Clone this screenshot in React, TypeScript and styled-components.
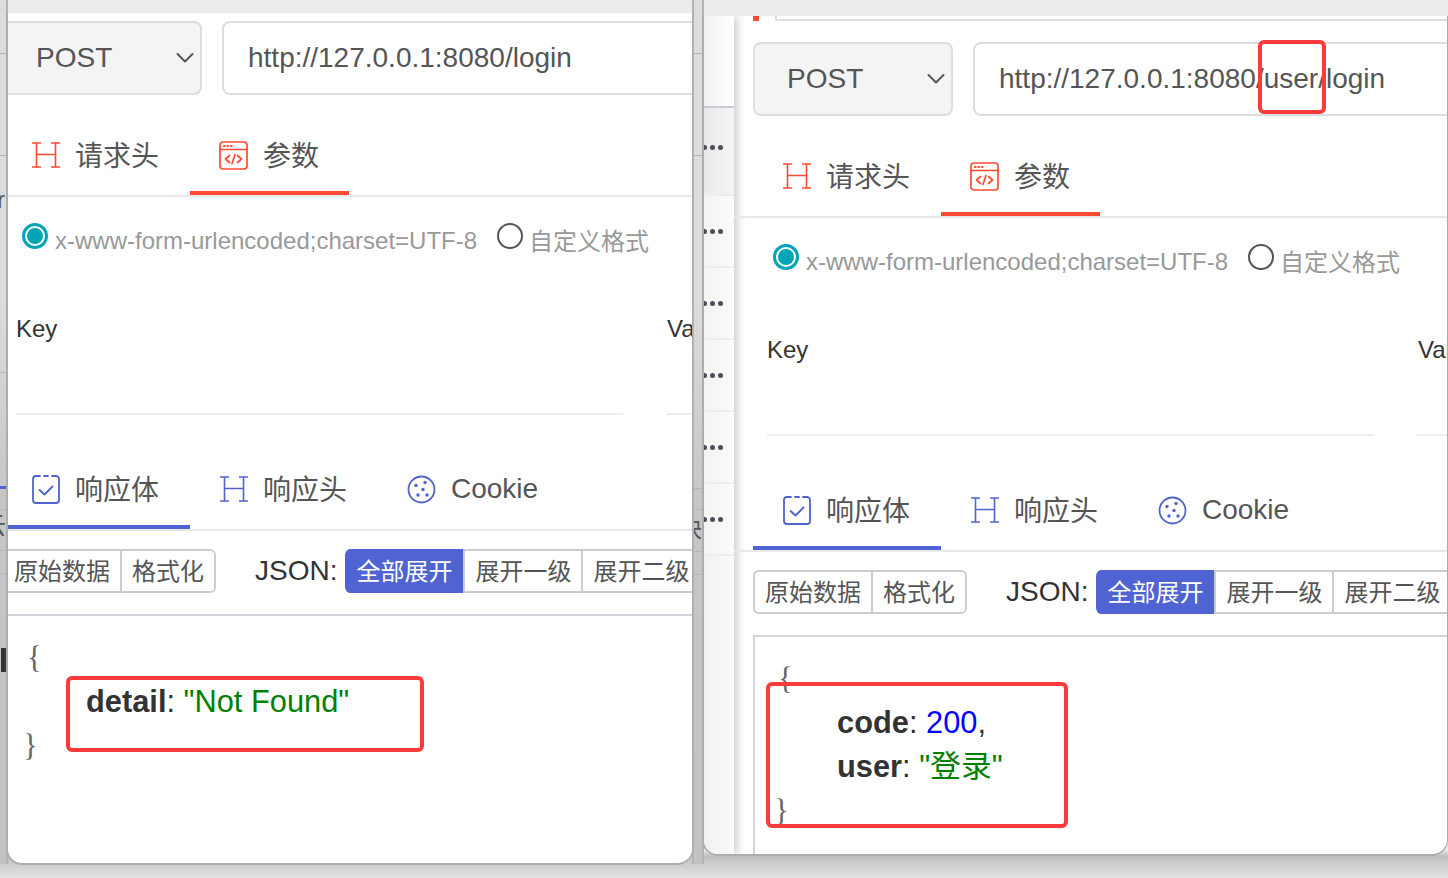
import React from 'react';
import styled, { createGlobalStyle } from 'styled-components';

const Global = createGlobalStyle`
  html, body { margin: 0; padding: 0; background: #e4e4e4; }
  body { font-family: "Liberation Sans", "Noto Sans CJK SC", sans-serif; }
  * { box-sizing: border-box; }
`;

const RED = '#ff4a33';
const BLUE = '#4f63d2';

const Desktop = styled.div`
  position: relative;
  width: 1448px;
  height: 878px;
  overflow: hidden;
  background: linear-gradient(180deg, #ececec 0, #ececec 850px, #bfbfbf 856px, #e4e4e4 878px);
`;
const Strip = styled.div<{ $left: number; $width: number }>`
  position: absolute;
  top: 0;
  bottom: 14px;
  left: ${p => p.$left}px;
  width: ${p => p.$width}px;
  overflow: hidden;
  background: linear-gradient(180deg, #dcdcdc 0, #dcdcdc 300px, #c6c6c6 500px, #c2c2c2 100%);
  border-right: 2px solid #b4b4b4;
  border-left: ${p => (p.$left > 0 ? '2px solid #b4b4b4' : 'none')};
`;
const StripRule = styled.div<{ $top: number; $color?: string; $height?: number }>`
  position: absolute;
  left: 0;
  right: 0;
  top: ${p => p.$top}px;
  height: ${p => p.$height ?? 1}px;
  background: ${p => p.$color ?? '#b4b4b4'};
`;
const StripGlyph = styled.span<{ $top: number; $right: number }>`
  position: absolute;
  top: ${p => p.$top}px;
  right: ${p => p.$right}px;
  font-size: 24px;
  line-height: 28px;
  color: #555;
`;
const StripMark = styled.div`
  position: absolute;
  left: 1px;
  top: 648px;
  width: 5px;
  height: 24px;
  background: #333;
`;

const Win = styled.div<{ $left: number; $top: number; $width: number; $height: number; $z: number }>`
  position: absolute;
  left: ${p => p.$left}px;
  top: ${p => p.$top}px;
  width: ${p => p.$width}px;
  height: ${p => p.$height}px;
  z-index: ${p => p.$z};
  display: flex;
  overflow: hidden;
  background: #fff;
  border-left: 2px solid #adadad;
  border-bottom: 2px solid #adadad;
  border-right: 1px solid #adadad;
  border-radius: 0 0 16px 16px;
`;

const Rail = styled.div`
  flex: none;
  width: 30px;
  display: flex;
  flex-direction: column;
  background: linear-gradient(90deg, #f1f1f1, #fafafa);
  box-shadow: 4px 0 8px rgba(0, 0, 0, 0.18);
`;
const RailHead = styled.div`
  height: 92px;
  border-bottom: 2px solid #c8cdd5;
  background: linear-gradient(90deg, #f2f2f2, #fff);
`;
const RailRow = styled.div<{ $active?: boolean; $h: number }>`
  height: ${p => p.$h}px;
  flex: none;
  display: flex;
  align-items: center;
  gap: 3px;
  padding-bottom: ${p => (p.$active ? 8 : 0)}px;
  background: ${p => (p.$active ? 'linear-gradient(90deg, #e8e8e8, #f6f6f6)' : 'linear-gradient(90deg, #f3f3f3, #fbfbfb)')};
  border-bottom: 2px solid #ededed;
`;
const Dot = styled.i`
  flex: none;
  width: 5px;
  height: 5px;
  border-radius: 50%;
  background: #4a4f57;
  &:first-child { margin-left: -2px; }
`;

const Panel = styled.div<{ $inset: number; $shift: number }>`
  flex: none;
  width: 780px;
  margin-left: ${p => p.$shift}px;
  padding-left: ${p => p.$inset}px;
  --inset: ${p => p.$inset}px;
`;
const Stub = styled.div`
  height: 5px;
  display: flex;
  margin-bottom: 21px;
`;
const StubMark = styled.div`
  width: 6px;
  background: ${RED};
  margin-right: 16px;
`;
const StubField = styled.div`
  flex: 1;
  border-left: 2px solid #ddd;
  border-bottom: 2px solid #ddd;
`;
const RequestBar = styled.div<{ $top: number }>`
  display: flex;
  gap: 20px;
  padding-top: ${p => p.$top}px;
`;
const MethodSelect = styled.div`
  flex: none;
  width: 200px;
  height: 74px;
  display: flex;
  align-items: center;
  justify-content: space-between;
  padding: 0 6px 0 32px;
  background: #f4f4f4;
  border: 2px solid #ddd;
  border-radius: 8px;
  font-size: 28px;
  color: #555;
`;
const UrlField = styled.div`
  flex: none;
  width: 540px;
  height: 74px;
  display: flex;
  align-items: center;
  padding-left: 24px;
  border: 2px solid #ddd;
  border-radius: 8px;
  font-size: 28px;
  color: #555;
`;
const TabBar = styled.div<{ $top: number }>`
  display: flex;
  height: 80px;
  margin-top: ${p => p.$top}px;
  margin-left: calc(var(--inset) * -1);
  padding-left: var(--inset);
  border-bottom: 2px solid #e8e8e8;
`;
const Tab = styled.div<{ $active?: boolean; $tone: string; $w: number }>`
  position: relative;
  flex: none;
  width: ${p => p.$w}px;
  display: flex;
  align-items: center;
  gap: 15px;
  padding: 0 0 2px 29px;
  font-size: 28px;
  color: #555;
  &::after {
    content: '';
    display: ${p => (p.$active ? 'block' : 'none')};
    position: absolute;
    left: 0;
    right: 0;
    bottom: 0;
    height: 4px;
    background: ${p => p.$tone};
  }
  svg { flex: none; color: ${p => p.$tone}; }
`;
const CjkLabel = styled.span`
  padding-bottom: 2px;
`;
const RadioRow = styled.div`
  display: flex;
  align-items: center;
  height: 28px;
  margin: 30px 0 0 20px;
  font-size: 24px;
  color: #999;
`;
const RadioMark = styled.span<{ $on?: boolean }>`
  flex: none;
  position: relative;
  top: -5px;
  width: 26px;
  height: 26px;
  margin-right: ${p => (p.$on ? 7 : 6)}px;
  border-radius: 50%;
  border: ${p => (p.$on ? '3px solid #00a6b8' : '2px solid #555')};
  background: #fff;
  &::after {
    content: '';
    display: ${p => (p.$on ? 'block' : 'none')};
    position: absolute;
    inset: 2px;
    border-radius: 50%;
    background: #00a6b8;
  }
`;
const RadioLabel = styled.span<{ $gap?: number; $cjk?: boolean }>`
  margin-right: ${p => p.$gap ?? 0}px;
  padding-bottom: ${p => (p.$cjk ? 4 : 0)}px;
  white-space: nowrap;
`;
const ParamHead = styled.div`
  display: flex;
  height: 28px;
  margin: 60px 0 0 14px;
  font-size: 24px;
  line-height: 28px;
  color: #333;
`;
const KeyCol = styled.div`
  width: 651px;
  flex: none;
`;
const ParamRules = styled.div`
  display: flex;
  gap: 43px;
  margin: 70px 0 0 14px;
`;
const ParamRule = styled.div<{ $w: number }>`
  flex: none;
  width: ${p => p.$w}px;
  height: 2px;
  background: #eee;
`;
const Toolbar = styled.div`
  display: flex;
  align-items: center;
  height: 44px;
  margin-top: 18px;
`;
const BtnGroup = styled.div`
  flex: none;
  display: flex;
  height: 44px;
  border: 2px solid #ccc;
  border-radius: 6px;
  overflow: hidden;
`;
const GroupBtn = styled.div<{ $on?: boolean; $w: number }>`
  flex: none;
  width: ${p => p.$w}px;
  display: flex;
  align-items: center;
  justify-content: center;
  padding-bottom: 3px;
  font-size: 24px;
  white-space: nowrap;
  color: ${p => (p.$on ? '#fff' : '#555')};
  background: ${p => (p.$on ? BLUE : '#fff')};
  & + & { border-left: 2px solid #ccc; }
`;
const JsonLabel = styled.span`
  margin: 0 8px 0 39px;
  font-size: 28px;
  color: #333;
  white-space: nowrap;
`;
const ActionGroup = styled(BtnGroup)`
  border: none;
  width: 380px;
  border-radius: 6px 0 0 6px;
  ${GroupBtn} {
    border-top: 2px solid #ccc;
    border-bottom: 2px solid #ccc;
  }
  ${GroupBtn}:first-child {
    border-color: ${BLUE};
  }
`;
const JsonBox = styled.div`
  margin-top: 21px;
  height: 300px;
  padding: 20px 0 0 0;
  border-top: 2px solid #d0d5dc;
  border-left: 2px solid #d0d5dc;
  font-size: 30.8px;
  line-height: 44px;
  color: #333;
`;
const Brace = styled.div<{ $x: number }>`
  padding-left: ${p => p.$x}px;
  font-family: "Liberation Serif", serif;
  color: #666;
`;
const JsonLine = styled.div`
  padding-left: 82px;
  white-space: nowrap;
`;
const JsonKey = styled.b`
  font-weight: 700;
`;
const JsonStr = styled.span`
  color: #008000;
`;
const JsonNum = styled.span`
  color: #0000ff;
`;
const Note = styled.div<{ $l: number; $t: number; $w: number; $h: number }>`
  position: absolute;
  z-index: 5;
  left: ${p => p.$l}px;
  top: ${p => p.$t}px;
  width: ${p => p.$w}px;
  height: ${p => p.$h}px;
  border: 4px solid #fb3b3b;
  border-radius: 6px;
  pointer-events: none;
`;

const Chevron = () => (
  <svg width="18" height="12" viewBox="0 0 18 12" fill="none" stroke="#555" strokeWidth="2" strokeLinecap="round" strokeLinejoin="round">
    <path d="M1.5 2 9 9.5 16.5 2" />
  </svg>
);
const HeaderIcon = () => (
  <svg width="29" height="26" viewBox="-1 0 29 26" fill="none" stroke="currentColor" strokeWidth="1.6">
    <path d="M0 1h9M4.5 1v24M0 25h9M19 1h9M23.5 1v24M19 25h9M4.5 12.5h19" />
  </svg>
);
const ParamIcon = () => (
  <svg width="29" height="29" viewBox="0 0 29 29" fill="none" stroke="currentColor" strokeWidth="1.7" strokeLinecap="round" strokeLinejoin="round">
    <rect x="1" y="1" width="27" height="27" rx="3" />
    <path d="M1 8.5h27" />
    <path d="M5 5h.6M8.5 5h.6M12 5h.6" strokeWidth="2.2" />
    <path d="M10.5 14.5 6.5 18l4 3.5M18.5 14.5l4 3.5-4 3.5M16 13.5l-3 9" />
  </svg>
);
const BodyIcon = () => (
  <svg width="29" height="29" viewBox="-1 0 29 29" fill="none" stroke="currentColor" strokeWidth="1.8" strokeLinecap="round" strokeLinejoin="round">
    <path d="M8 1H4a3 3 0 0 0-3 3v21a3 3 0 0 0 3 3h20a3 3 0 0 0 3-3V4a3 3 0 0 0-3-3h-4M12 1h4" />
    <path d="m7.5 15 5 4.5 8-8" />
  </svg>
);
const CookieIcon = () => (
  <svg width="29" height="29" viewBox="0 0 29 29" fill="none">
    <circle cx="14.5" cy="14.5" r="13" stroke="currentColor" strokeWidth="1.8" />
    <g fill="currentColor">
      <circle cx="9" cy="10.5" r="1.7" />
      <circle cx="18" cy="7.5" r="1.7" />
      <circle cx="16" cy="14.5" r="1.7" />
      <circle cx="11" cy="20" r="1.7" />
      <circle cx="20" cy="20" r="1.7" />
    </g>
  </svg>
);

type Props = {
  inset: number;
  shift: number;
  top: number;
  url: string;
  stub?: boolean;
  children: React.ReactNode;
};

const ApiPanel = ({ inset, shift, top, url, stub, children }: Props) => (
  <Panel $inset={inset} $shift={shift}>
    {stub && (
      <Stub>
        <StubMark />
        <StubField />
      </Stub>
    )}
    <RequestBar $top={top}>
      <MethodSelect>
        POST
        <Chevron />
      </MethodSelect>
      <UrlField>{url}</UrlField>
    </RequestBar>
    <TabBar $top={22}>
      <Tab $tone={RED} $w={188}>
        <HeaderIcon />
        <CjkLabel>请求头</CjkLabel>
      </Tab>
      <Tab $tone={RED} $w={159} $active>
        <ParamIcon />
        <CjkLabel>参数</CjkLabel>
      </Tab>
    </TabBar>
    <RadioRow>
      <RadioMark $on />
      <RadioLabel $gap={20}>x-www-form-urlencoded;charset=UTF-8</RadioLabel>
      <RadioMark />
      <RadioLabel $cjk>自定义格式</RadioLabel>
    </RadioRow>
    <ParamHead>
      <KeyCol>Key</KeyCol>
      <span>Value</span>
    </ParamHead>
    <ParamRules>
      <ParamRule $w={607} />
      <ParamRule $w={100} />
    </ParamRules>
    <TabBar $top={36}>
      <Tab $tone={BLUE} $w={188} $active>
        <BodyIcon />
        <CjkLabel>响应体</CjkLabel>
      </Tab>
      <Tab $tone={BLUE} $w={188}>
        <HeaderIcon />
        <CjkLabel>响应头</CjkLabel>
      </Tab>
      <Tab $tone={BLUE} $w={190}>
        <CookieIcon />
        Cookie
      </Tab>
    </TabBar>
    <Toolbar>
      <BtnGroup>
        <GroupBtn $w={116}>原始数据</GroupBtn>
        <GroupBtn $w={94}>格式化</GroupBtn>
      </BtnGroup>
      <JsonLabel>JSON:</JsonLabel>
      <ActionGroup>
        <GroupBtn $w={118} $on>全部展开</GroupBtn>
        <GroupBtn $w={118}>展开一级</GroupBtn>
        <GroupBtn $w={118}>展开二级</GroupBtn>
      </ActionGroup>
    </Toolbar>
    <JsonBox>{children}</JsonBox>
  </Panel>
);

export default function App() {
  return (
    <Desktop>
      <Global />
      <Strip $left={0} $width={8}>
        <StripRule $top={53} />
        <StripRule $top={155} />
        <StripRule $top={372} />
        <StripRule $top={486} $color={BLUE} $height={3} />
        <StripRule $top={509} />
        <StripRule $top={550} />
        <StripRule $top={573} />
        <StripGlyph $top={186} $right={1}>r</StripGlyph>
        <StripGlyph $top={512} $right={0}>云</StripGlyph>
        <StripMark />
      </Strip>
      <Strip $left={692} $width={12}>
        <StripRule $top={53} />
        <StripRule $top={155} />
        <StripRule $top={488} />
        <StripRule $top={509} />
        <StripRule $top={551} />
        <StripRule $top={574} />
        <StripGlyph $top={515} $right={0}>块</StripGlyph>
      </Strip>
      <Win $left={6} $top={13} $width={687} $height={852} $z={2}>
        <ApiPanel inset={0} shift={-6} top={8} url="http://127.0.0.1:8080/login">
          <Brace $x={23}>{'{'}</Brace>
          <JsonLine>
            <JsonKey>detail</JsonKey>: <JsonStr>"Not Found"</JsonStr>
          </JsonLine>
          <Brace $x={19}>{'}'}</Brace>
        </ApiPanel>
      </Win>
      <Win $left={702} $top={16} $width={746} $height={840} $z={1}>
        <Rail>
          <RailHead />
          <RailRow $active $h={88}><Dot /><Dot /><Dot /></RailRow>
          <RailRow $h={72}><Dot /><Dot /><Dot /></RailRow>
          <RailRow $h={72}><Dot /><Dot /><Dot /></RailRow>
          <RailRow $h={72}><Dot /><Dot /><Dot /></RailRow>
          <RailRow $h={72}><Dot /><Dot /><Dot /></RailRow>
          <RailRow $h={72}><Dot /><Dot /><Dot /></RailRow>
        </Rail>
        <ApiPanel inset={19} shift={0} top={0} stub url="http://127.0.0.1:8080/user/login">
          <Brace $x={23}>{'{'}</Brace>
          <JsonLine>
            <JsonKey>code</JsonKey>: <JsonNum>200</JsonNum>,
          </JsonLine>
          <JsonLine>
            <JsonKey>user</JsonKey>: <JsonStr>"登录"</JsonStr>
          </JsonLine>
          <Brace $x={19}>{'}'}</Brace>
        </ApiPanel>
      </Win>
      <Note $l={66} $t={676} $w={358} $h={76} />
      <Note $l={766} $t={682} $w={302} $h={146} />
      <Note $l={1258} $t={40} $w={68} $h={74} />
    </Desktop>
  );
}
